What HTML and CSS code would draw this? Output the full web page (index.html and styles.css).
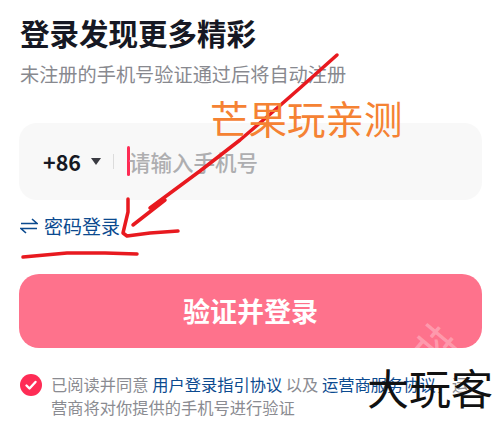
FILE: index.html
```html
<!DOCTYPE html>
<html lang="zh-CN">
<head>
  <meta charset="UTF-8" />
  <meta name="viewport" content="width=device-width, initial-scale=1.0" />
  <title>登录</title>
  <link rel="stylesheet" href="styles.css">
</head>
<body>
  <div class="login">
    <h1 class="title">登录发现更多精彩</h1>
    <p class="subtitle">未注册的手机号验证通过后将自动注册</p>

    <div class="phone">
      <span class="code">+86</span>
      <span class="caret"></span>
      <span class="divider"></span>
      <span class="cursor"></span>
      <span class="placeholder">请输入手机号</span>
    </div>

    <a class="switch">
      <svg class="switch-icon" viewBox="0 0 18 16">
        <path d="M1 5.500h16L12 1M17 10.500H1L6 15"/>
      </svg>
      密码登录
    </a>

    <button class="submit">
      <span class="submit-label">验证并登录</span>
      <span class="stamp">芒</span>
    </button>

    <div class="agree">
      <svg class="check" viewBox="0 0 22 22">
        <circle cx="11" cy="11" r="11"/>
        <path d="M6.500 11.500l3 3 6-6.500"/>
      </svg>
      <p class="agree-text">已阅读并同意 <a>用户登录指引协议</a> 以及 <a>运营商服务协议</a>，运营商将对你提供的手机号进行验证</p>
    </div>
  </div>

  <!-- marks drawn over the screenshot -->
  <svg class="marks" viewBox="0 0 503 423">
    <path d="M337 55L300 88L268 116L240 140L200 171L150 208"/>
    <path d="M165 200L133 225"/>
    <path d="M128 199L128 212L123 233L127 236L150 233L178 231"/>
    <path d="M23 257L67 253L105 253L137 254"/>
  </svg>
  <div class="mark-orange">芒果玩亲测</div>
  <div class="mark-black">大玩客</div>
</body>
</html>
```

FILE: styles.css
```css
* {
  box-sizing: border-box;
  font-family: 'Noto Sans CJK SC', 'Liberation Sans', sans-serif;
}

body {
  margin: 0;
  height: 423px;
  background: #fff;
  overflow: hidden;
  position: relative;
}

.login {
  padding: 11px 21px 0 19px;
}

.title {
  margin: 0 0 0 1px;
  font-size: 29.500px;
  line-height: 42px;
  font-weight: 700;
  color: #161823;
}

.subtitle {
  margin: 7px 0 0 1px;
  font-size: 19.200px;
  line-height: 28px;
  color: #88898f;
  white-space: nowrap;
}

.phone {
  display: flex;
  align-items: center;
  height: 77px;
  margin-top: 35px;
  padding-left: 24px;
  padding-bottom: 1px;
  background: #f8f8f8;
  border-radius: 18px;
}

.code {
  font-size: 21.500px;
  font-weight: 700;
  color: #161823;
}

.caret {
  margin-left: 10px;
  border-top: 7px solid #3a3b42;
  border-left: 5px solid transparent;
  border-right: 5px solid transparent;
}

.divider {
  width: 1px;
  height: 15px;
  margin-left: 12px;
  background: #dcdcdc;
}

.cursor {
  width: 3px;
  height: 30px;
  margin-left: 13px;
  background: #fe2c55;
  border-radius: 2px;
}

.placeholder {
  font-size: 21.500px;
  font-weight: 500;
  color: #aeaeb0;
  margin-left: -1px;
}

.switch {
  display: flex;
  align-items: center;
  gap: 6px;
  margin: 13px 0 0 1px;
  font-size: 19px;
  line-height: 26px;
  color: #0b4a8f;
}

.switch-icon {
  width: 18px;
  height: 16px;
  fill: none;
  stroke: #0b4a8f;
  stroke-width: 1.600;
}

.submit {
  display: block;
  position: relative;
  width: 100%;
  height: 74px;
  margin-top: 35px;
  padding-bottom: 2px;
  border: none;
  border-radius: 20px;
  background: #fe728c;
  color: #fff;
  font-size: 27px;
  font-weight: 700;
  overflow: hidden;
}

.stamp {
  position: absolute;
  left: 392px;
  top: 50px;
  font-size: 46px;
  line-height: 46px;
  font-weight: 400;
  color: rgba(255, 255, 255, 0.3);
  transform: rotate(40deg);
}

.agree {
  display: flex;
  align-items: flex-start;
  gap: 9px;
  margin: 25px 0 0 1px;
}

.check {
  flex: none;
  width: 22px;
  height: 22px;
  margin-top: 1px;
}

.check circle {
  fill: #fe2c55;
}

.check path {
  fill: none;
  stroke: #fff;
  stroke-width: 2.400;
  stroke-linecap: round;
  stroke-linejoin: round;
}

.agree-text {
  margin: 0;
  font-size: 16.250px;
  line-height: 23px;
  color: #8a8b91;
}

.agree-text a {
  color: #0b4a8f;
}

.marks {
  position: absolute;
  left: 0;
  top: 0;
  width: 503px;
  height: 423px;
  fill: none;
  stroke: #e8191f;
  stroke-width: 3.500;
  stroke-linecap: round;
  stroke-linejoin: round;
}

.mark-orange {
  position: absolute;
  left: 210px;
  top: 90px;
  font-size: 38.500px;
  line-height: 54px;
  color: #f58233;
  white-space: nowrap;
}

.mark-black {
  position: absolute;
  left: 367px;
  top: 357px;
  font-size: 42px;
  line-height: 60px;
  font-weight: 400;
  color: #111;
  white-space: nowrap;
}
```
